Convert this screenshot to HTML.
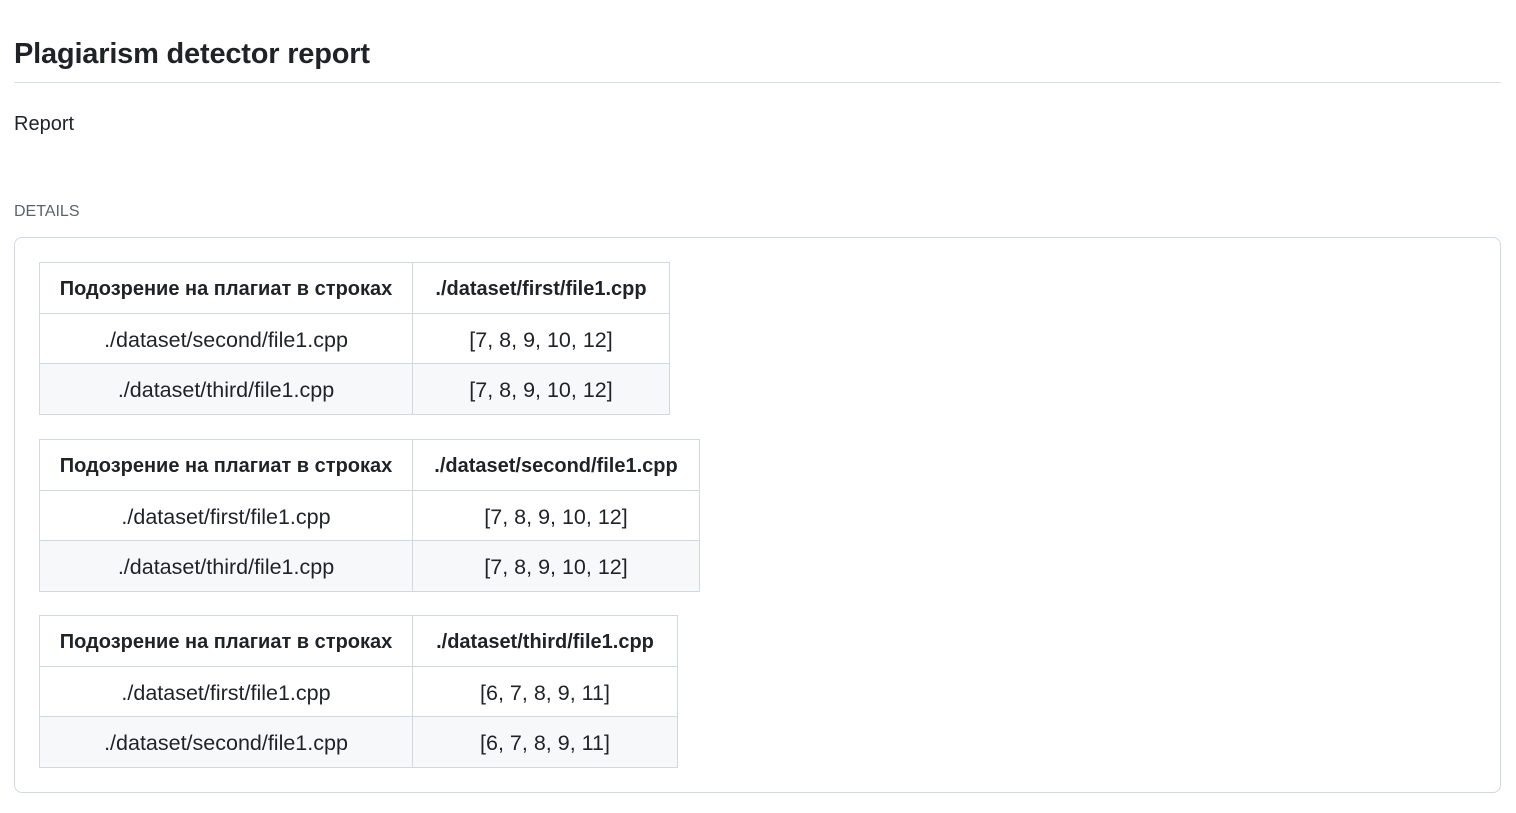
<!DOCTYPE html>
<html><head><meta charset="utf-8"><style>
body{margin:0;background:#fff;font-family:"Liberation Sans",sans-serif;color:#1f2328;width:1516px;height:813px;overflow:hidden;position:relative}
h1{position:absolute;left:14px;top:36px;margin:0;font-size:29px;font-weight:bold;line-height:36px;letter-spacing:-0.2px}
.hr{position:absolute;left:14px;top:82px;width:1487px;height:1px;background:#d8dee4}
.rep{position:absolute;left:14px;top:111px;font-size:20px;line-height:26px}
.det{position:absolute;left:14px;top:202px;font-size:16px;color:#59636e;line-height:20px}
.card{position:absolute;left:14px;top:237px;width:1485px;height:554px;border:1px solid #d1d9e0;border-radius:8px}
table{position:absolute;left:39px;border-collapse:collapse;font-size:21.5px}
td,th{border:1px solid #d1d9e0;height:50.5px;padding:4px 0 0;box-sizing:border-box;text-align:center;white-space:nowrap}
th{font-weight:bold;font-size:20px}
tr.g td{background:#f6f8fa}
</style></head><body>
<h1>Plagiarism detector report</h1>
<div class="hr"></div>
<div class="rep">Report</div>
<div class="det">DETAILS</div>
<div class="card"></div>
<table style="top:262px">
<tr><th style="width:373px">Подозрение на плагиат в строках</th><th style="width:257px">./dataset/first/file1.cpp</th></tr>
<tr><td>./dataset/second/file1.cpp</td><td>[7, 8, 9, 10, 12]</td></tr>
<tr class="g"><td>./dataset/third/file1.cpp</td><td>[7, 8, 9, 10, 12]</td></tr>
</table>
<table style="top:439px">
<tr><th style="width:373px">Подозрение на плагиат в строках</th><th style="width:287px">./dataset/second/file1.cpp</th></tr>
<tr><td>./dataset/first/file1.cpp</td><td>[7, 8, 9, 10, 12]</td></tr>
<tr class="g"><td>./dataset/third/file1.cpp</td><td>[7, 8, 9, 10, 12]</td></tr>
</table>
<table style="top:615px">
<tr><th style="width:373px">Подозрение на плагиат в строках</th><th style="width:265px">./dataset/third/file1.cpp</th></tr>
<tr><td>./dataset/first/file1.cpp</td><td>[6, 7, 8, 9, 11]</td></tr>
<tr class="g"><td>./dataset/second/file1.cpp</td><td>[6, 7, 8, 9, 11]</td></tr>
</table>
</body></html>
